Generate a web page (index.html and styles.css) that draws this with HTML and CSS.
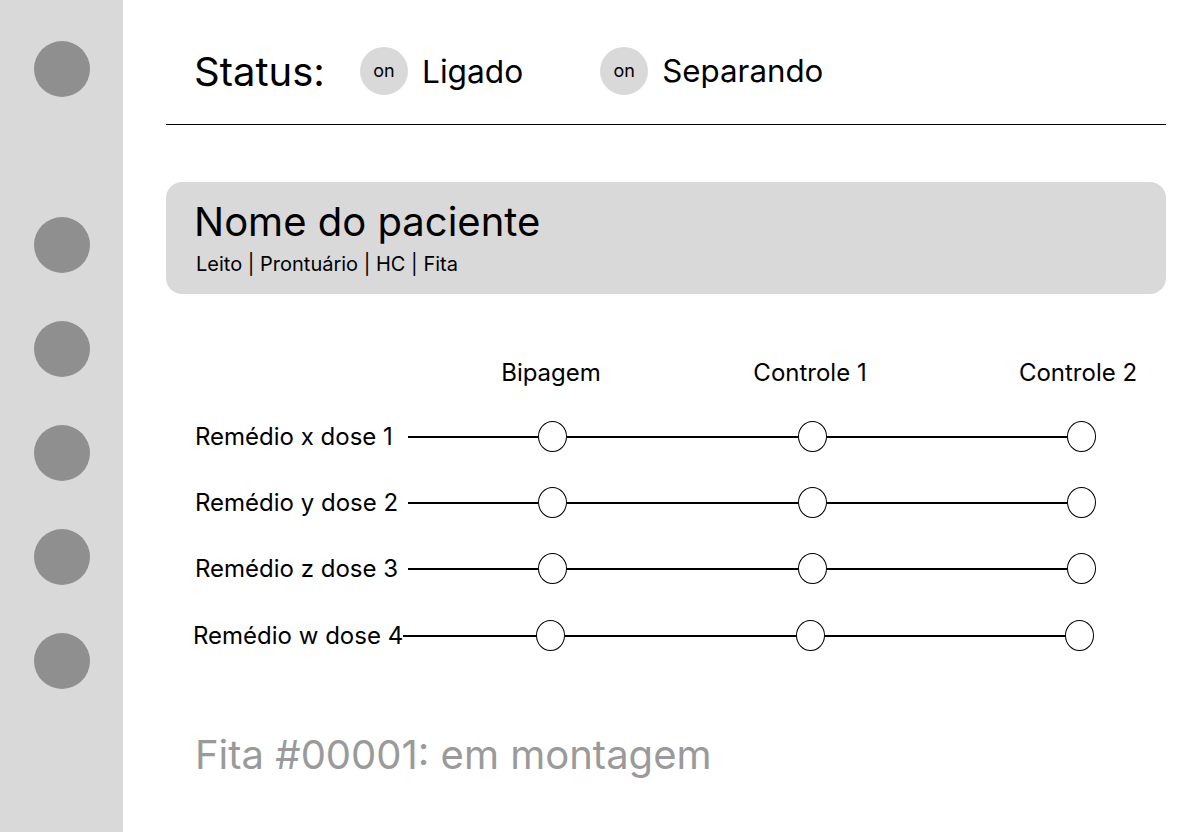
FILE: index.html
```html
<!DOCTYPE html>
<html lang="pt">
<head>
<meta charset="utf-8">
<link rel="stylesheet" href="styles.css">
</head>
<body>
<div class="app">
  <aside class="sidebar">
    <span class="dot dot-first"></span>
    <span class="dot"></span>
    <span class="dot"></span>
    <span class="dot"></span>
    <span class="dot"></span>
    <span class="dot"></span>
  </aside>
  <main class="main">
    <header class="status">
      <span class="status-label">Status:</span>
      <span class="chip"><span class="chip-dot">on</span><span class="chip-text">Ligado</span></span>
      <span class="chip chip-second"><span class="chip-dot">on</span><span class="chip-text">Separando</span></span>
    </header>
    <hr class="divider">
    <section class="patient">
      <h1 class="patient-name">Nome do paciente</h1>
      <p class="patient-meta">Leito | Prontuário | HC | Fita</p>
    </section>
    <section class="track-table">
      <div class="heads">
        <span class="head head-1">Bipagem</span>
        <span class="head head-2">Controle 1</span>
        <span class="head head-3">Controle 2</span>
      </div>
      <div class="row">
        <span class="label">Remédio x dose 1</span>
        <div class="track">
          <span class="seg seg-a"></span><span class="node"></span><span class="seg seg-b"></span><span class="node"></span><span class="seg seg-c"></span><span class="node"></span>
        </div>
      </div>
      <div class="row">
        <span class="label">Remédio y dose 2</span>
        <div class="track">
          <span class="seg seg-a"></span><span class="node"></span><span class="seg seg-b"></span><span class="node"></span><span class="seg seg-c"></span><span class="node"></span>
        </div>
      </div>
      <div class="row">
        <span class="label">Remédio z dose 3</span>
        <div class="track">
          <span class="seg seg-a"></span><span class="node"></span><span class="seg seg-b"></span><span class="node"></span><span class="seg seg-c"></span><span class="node"></span>
        </div>
      </div>
      <div class="row row-last">
        <span class="label label-last">Remédio w dose 4</span>
        <div class="track">
          <span class="seg seg-a seg-a-last"></span><span class="node"></span><span class="seg seg-b"></span><span class="node"></span><span class="seg seg-c"></span><span class="node"></span>
        </div>
      </div>
    </section>
    <p class="footer-status">Fita #00001: em montagem</p>
  </main>
</div>
</body>
</html>
```

FILE: styles.css
```css
* { box-sizing: border-box; }
html, body { margin: 0; padding: 0; }
body {
  font-family: Inter, "Noto Sans", sans-serif;
  color: #000;
  background: #fff;
  width: 1200px;
  height: 832px;
  overflow: hidden;
}
.app {
  display: flex;
  height: 832px;
}
.sidebar {
  width: 123px;
  flex: none;
  background: #d9d9d9;
  display: flex;
  flex-direction: column;
  align-items: center;
  padding-top: 41px;
  gap: 48px;
}
.dot {
  width: 56px;
  height: 56px;
  border-radius: 50%;
  background: #8f8f8f;
  display: block;
}
.dot-first { margin-bottom: 72px; }

.main {
  width: 1000px;
  margin-left: 43px;
}
.status {
  display: flex;
  align-items: center;
  height: 48px;
  margin-top: 47px;
  padding-left: 28px;
}
.status-label {
  font-size: 40px;
  margin-right: 35px;
  width: 131px;
  white-space: nowrap;
}
.chip {
  display: flex;
  align-items: center;
  gap: 14px;
}
.chip-second { margin-left: 77px; }
.chip-dot {
  width: 48px;
  height: 48px;
  border-radius: 50%;
  background: #d9d9d9;
  display: flex;
  align-items: center;
  justify-content: center;
  font-size: 18px;
  padding-bottom: 2px;
}
.chip-text { font-size: 31.7px; }
.chip-second .chip-text { font-size: 31.3px; }
.divider {
  border: 0;
  border-top: 1px solid #000;
  margin: 29px 0 0;
  height: 0;
}
.patient {
  margin-top: 57px;
  height: 112px;
  background: #d9d9d9;
  border-radius: 16px;
  padding: 16px 28px 0;
}
.patient-name {
  font-size: 40px;
  font-weight: 400;
  margin: 0;
  line-height: 48px;
}
.patient-meta {
  font-size: 20px;
  margin: 6px 0 0 2px;
  line-height: 24px;
}
.track-table {
  margin-top: 64px;
}
.heads {
  position: relative;
  height: 30px;
  font-size: 24px;
  line-height: 30px;
}
.head {
  position: absolute;
  top: 0;
  transform: translateX(-50%);
  white-space: nowrap;
}
.head-1 { left: 385px; }
.head-2 { left: 644px; }
.head-3 { left: 912px; }
.row {
  display: flex;
  align-items: center;
  height: 31px;
  margin-top: 33px;
  padding-left: 29px;
}
.row + .row { margin-top: 35px; }
.row-last { margin-top: 36px !important; padding-left: 27px; }
.label {
  font-size: 24px;
  width: 213px;
  white-space: nowrap;
}
.label-last { width: 210px; }
.track {
  display: flex;
  align-items: center;
}
.seg {
  height: 2px;
  background: #000;
  display: block;
}
.seg-a { width: 130px; }
.seg-a-last { width: 133px; }
.seg-b { width: 231px; }
.seg-c { width: 240px; }
.node {
  width: 29px;
  height: 31px;
  border: 1px solid #000;
  border-radius: 50%;
  background: #fff;
  display: block;
}
.footer-status {
  margin: 80px 0 0 29px;
  font-size: 40px;
  color: #9a9a9a;
  line-height: 48px;
}
```
